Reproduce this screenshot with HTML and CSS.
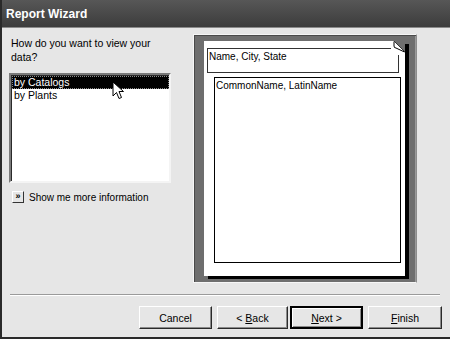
FILE: index.html
```html
<!DOCTYPE html>
<html lang="en">
<head>
    <meta charset="UTF-8">
    <title>Report Wizard</title>
    <link rel="stylesheet" href="styles.css">
</head>
<body>
    <div class="window">
        <div class="titlebar">Report Wizard</div>
        <div class="content">
            <div class="left-panel">
                <p class="question">How do you want to view your data?</p>
                <div class="listbox">
                    <div class="list-item selected">by Catalogs</div>
                    <div class="list-item">by Plants</div>
                    <svg class="cursor" width="13" height="20" viewBox="0 0 13 20">
                        <path d="M1 1 L1 15 L4.5 11.5 L7 17.5 L9.5 16.5 L7 10.5 L11.5 10.5 Z" fill="#fff" stroke="#000" stroke-width="1"/>
                    </svg>
                </div>
                <div class="more-info">
                    <span class="more-btn">&raquo;</span>
                    <span>Show me more information</span>
                </div>
            </div>
            <div class="preview">
                <div class="page">
                    <div class="group-box">Name, City, State</div>
                    <div class="detail-box">CommonName, LatinName</div>
                    <svg class="dog-ear" width="14" height="14" viewBox="0 0 14 14">
                        <path d="M0 0 L3 0 L14 11 L14 14 L0 14 Z" fill="#fff"/>
                        <path d="M3 0.5 L3 5 Q3 7 5 7 L13.5 11" fill="#fff" stroke="#000" stroke-width="1"/>
                        <path d="M3 0 L14 11" fill="none" stroke="#000" stroke-width="1"/>
                        <path d="M3 0 L14 0 L14 11 Z" fill="#6e6e6e"/>
                    </svg>
                </div>
            </div>
        </div>
        <div class="footer">
            <div class="separator"></div>
            <div class="buttons">
                <button class="button">Cancel</button>
                <button class="button back">&lt; <u>B</u>ack</button>
                <button class="button default"><u>N</u>ext &gt;</button>
                <button class="button finish"><u>F</u>inish</button>
            </div>
        </div>
    </div>
</body>
</html>
```

FILE: styles.css
```css
body {
    margin: 0;
    font-family: 'Liberation Sans', Arial, sans-serif;
    font-size: 10px;
    color: #000;
    background-color: #e6e6e6;
}
.window {
    width: 450px;
    height: 339px;
    box-sizing: border-box;
    border-left: 2px solid #2a2a2a;
    border-bottom: 2px solid #2a2a2a;
    display: flex;
    flex-direction: column;
    background-color: #e6e6e6;
}
.titlebar {
    height: 27px;
    line-height: 28px;
    padding-left: 4px;
    font-size: 12px;
    font-weight: bold;
    color: #fff;
    background: linear-gradient(#575757, #3c3c3c);
    border-bottom: 1px solid #8a8a8a;
}
.content {
    display: flex;
    height: 264px;
}
.left-panel {
    width: 182px;
    padding-left: 7px;
    padding-top: 8px;
    box-sizing: border-box;
}
.question {
    margin: 0 0 0 2px;
    width: 150px;
    line-height: 14px;
    font-size: 10.5px;
}
.listbox {
    position: relative;
    margin-top: 9px;
    width: 162px;
    height: 110px;
    box-sizing: border-box;
    background-color: #fff;
    border: 2px solid;
    border-color: #7a7a7a #f4f4f4 #f4f4f4 #7a7a7a;
    box-shadow: inset 1px 1px 0 #2a2a2a;
    padding: 1px 0 0 1px;
}
.list-item {
    height: 13px;
    line-height: 13px;
    padding-left: 2px;
    font-size: 10.5px;
}
.list-item.selected {
    background-color: #000;
    color: #fff;
    outline: 1px dotted #888;
    outline-offset: -1px;
}
.cursor {
    position: absolute;
    left: 101px;
    top: 6px;
}
.more-info {
    display: flex;
    align-items: center;
    gap: 5px;
    margin-top: 8px;
    margin-left: 3px;
}
.more-btn {
    width: 12px;
    height: 12px;
    box-sizing: border-box;
    border: 1px solid;
    border-color: #fff #333 #333 #fff;
    font-size: 9px;
    line-height: 9px;
    text-align: center;
    font-weight: bold;
}
.preview {
    margin-top: 6px;
    margin-left: 9px;
    width: 224px;
    height: 249px;
    box-sizing: border-box;
    background-color: #6e6e6e;
    border: 1px solid;
    border-color: #f6f6f6 #8c8c8c #f6f6f6 #f6f6f6;
    box-shadow: inset 1px 1px 0 #4a4a4a, inset -1px 0 0 #9a9a9a;
    padding: 6px 0 0 10px;
}
.page {
    position: relative;
    width: 201px;
    height: 235px;
    box-sizing: border-box;
    background-color: #fff;
    box-shadow: 4px 3px 0 #000;
    padding: 7px 6px 0 3px;
}
.group-box {
    height: 25px;
    box-sizing: border-box;
    border: 1px solid #333;
    line-height: 13px;
    padding: 1px 0 0 1px;
}
.detail-box {
    margin: 4px -2px 0 7px;
    height: 186px;
    box-sizing: border-box;
    border: 1px solid #000;
    padding: 1px 0 0 1px;
    line-height: 13px;
}
.dog-ear {
    position: absolute;
    right: 0;
    top: 0;
}
.footer {
    padding: 2px 8px 0 8px;
}
.separator {
    height: 1px;
    background-color: #9a9a9a;
    border-bottom: 1px solid #fff;
    margin-right: 2px;
}
.buttons {
    display: flex;
    justify-content: flex-end;
    margin-top: 10px;
}
.button {
    font-family: 'Liberation Sans', Arial, sans-serif;
    font-size: 10.5px;
    width: 73px;
    height: 23px;
    padding: 0;
    background-color: #e6e6e6;
    color: #000;
    border: 1px solid;
    border-color: #fff #2a2a2a #2a2a2a #fff;
    box-shadow: inset -1px -1px 0 #8a8a8a;
    margin-left: 5px;
}
.button.back {
    width: 71px;
}
.button.default {
    margin-left: 2px;
    border: 2px solid #000;
    box-shadow: inset 1px 1px 0 #fff, inset -1px -1px 0 #8a8a8a;
}
.button.finish {
    width: 74px;
}
```
